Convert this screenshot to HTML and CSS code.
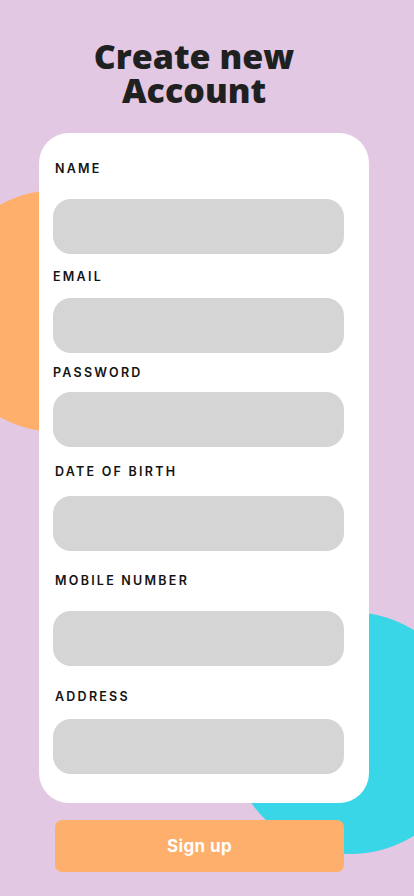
FILE: index.html
```html
<!DOCTYPE html>
<html lang="en">
<head>
<meta charset="utf-8">
<title>Create new Account</title>
<link rel="stylesheet" href="styles.css">
</head>
<body>
<main class="screen">
  <h1 class="title">Create new<br>Account</h1>
  <form class="card">
    <div class="field field--name">
      <label class="label">NAME</label>
      <div class="input"></div>
    </div>
    <div class="field field--email">
      <label class="label label--flush">EMAIL</label>
      <div class="input"></div>
    </div>
    <div class="field field--password">
      <label class="label label--flush">PASSWORD</label>
      <div class="input"></div>
    </div>
    <div class="field field--dob">
      <label class="label">DATE OF BIRTH</label>
      <div class="input"></div>
    </div>
    <div class="field field--mobile">
      <label class="label">MOBILE NUMBER</label>
      <div class="input"></div>
    </div>
    <div class="field field--address">
      <label class="label">ADDRESS</label>
      <div class="input"></div>
    </div>
  </form>
  <button class="signup" type="button">Sign up</button>
</main>
</body>
</html>
```

FILE: styles.css
```css
html, body {
  margin: 0;
  padding: 0;
}

body {
  width: 414px;
  height: 896px;
  overflow: hidden;
  background:
    radial-gradient(circle at 58px 311px, #feaf6b 120.5px, rgba(254,175,107,0) 121.5px),
    radial-gradient(circle at 350px 733px, #38d6e6 120.5px, rgba(56,214,230,0) 121.5px),
    #e3c8e4;
}

.screen {
  display: flex;
  flex-direction: column;
  padding-top: 39px;
}

.title {
  margin: 0;
  padding-right: 26px;
  text-align: center;
  font-family: "Open Sans", sans-serif;
  font-weight: 800;
  font-size: 34px;
  line-height: 34px;
  color: #1f2121;
}

.card {
  margin: 26px 0 0 39px;
  width: 330px;
  height: 670px;
  box-sizing: border-box;
  padding: 28px 25px 0 14px;
  background: #ffffff;
  border-radius: 30px;
  display: flex;
  flex-direction: column;
}

.field {
  display: flex;
  flex-direction: column;
}

.label {
  display: block;
  padding-left: 2px;
  font-family: "Inter", sans-serif;
  font-weight: 600;
  font-size: 12.5px;
  line-height: 16px;
  letter-spacing: 2.25px;
  color: #141414;
}

.label--flush {
  padding-left: 0;
}

.input {
  height: 55px;
  background: #d5d5d5;
  border-radius: 18px;
}

.field--name .input { margin-top: 22px; }
.field--email { margin-top: 15px; }
.field--email .input { margin-top: 13px; }
.field--password { margin-top: 12px; }
.field--password .input { margin-top: 11px; }
.field--dob { margin-top: 17px; }
.field--dob .input { margin-top: 16px; }
.field--mobile { margin-top: 22px; }
.field--mobile .input { margin-top: 22px; }
.field--address { margin-top: 23px; }
.field--address .input { margin-top: 14px; }

.signup {
  margin: 17px 0 0 55px;
  width: 289px;
  height: 52px;
  border: 0;
  border-radius: 7px;
  background: #feaf6b;
  color: #ffffff;
  font-family: "Inter", sans-serif;
  font-weight: 700;
  font-size: 17px;
  letter-spacing: 0.4px;
  padding: 0;
}
```
